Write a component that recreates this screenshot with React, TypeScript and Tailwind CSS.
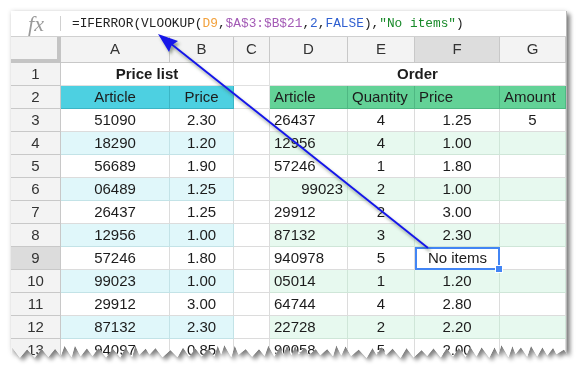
import React from "react";

const cols = ["A", "B", "C", "D", "E", "F", "G"];

const priceList = [
  ["51090", "2.30"], ["18290", "1.20"], ["56689", "1.90"], ["06489", "1.25"],
  ["26437", "1.25"], ["12956", "1.00"], ["57246", "1.80"], ["99023", "1.00"],
  ["29912", "3.00"], ["87132", "2.30"], ["94097", "0.85"],
];

const order = [
  ["26437", "4", "1.25", "5"], ["12956", "4", "1.00", ""], ["57246", "1", "1.80", ""],
  ["99023", "2", "1.00", ""], ["29912", "2", "3.00", ""], ["87132", "3", "2.30", ""],
  ["940978", "5", "No items", ""], ["05014", "1", "1.20", ""], ["64744", "4", "2.80", ""],
  ["22728", "2", "2.20", ""], ["90058", "5", "2.00", ""],
];

// jagged bottom edge for the torn-paper look
const tornClip = () => {
  const pts: string[] = [];
  let x = 556;
  let i = 0;
  while (x > 0) {
    const r = Math.abs(Math.sin(i * 12.9898) * 43758.5453) % 1;
    const y = i % 2 === 0 ? 343 + r * 4 : 334 + r * 5;
    pts.push(`${x.toFixed(1)}px ${y.toFixed(1)}px`);
    x -= 3 + r * 5;
    i++;
  }
  pts.push("0px 344px");
  return `polygon(0px 0px, 556px 0px, ${pts.join(", ")})`;
};

const Cell = ({ children, className = "" }: { children?: React.ReactNode; className?: string }) => (
  <div className={`h-[23px] flex items-center border-r border-b whitespace-nowrap overflow-hidden ${className}`}>
    {children}
  </div>
);

const App = () => {
  return (
    <div className="relative w-[577px] h-[374px] bg-white overflow-hidden pt-[11px] pl-[11px] font-['Liberation_Sans',Arial,sans-serif] text-[15px] text-[#1c1c1c]">
      <div className="w-[556px] [filter:drop-shadow(3px_3px_2px_rgba(0,0,0,0.45))_drop-shadow(0_0_2px_rgba(0,0,0,0.15))]">
        <div className="w-[556px] h-[351px] bg-white border-r border-[#b8b8b8]" style={{ clipPath: tornClip() }}>
          {/* formula bar */}
          <div className="flex items-center h-[26px] border-b border-[#d0d0d0]">
            <div className="w-[50px] flex items-center justify-end">
              <span className="font-['Liberation_Serif',serif] italic text-[22px] text-[#9a9a9a] leading-none mr-[16px]">fx</span>
              <span className="w-px h-[15px] bg-[#d0d0d0]" />
            </div>
            <div className="pl-[11px] font-['Liberation_Mono',monospace] text-[12.8px] text-[#222] whitespace-nowrap">
              =IFERROR(VLOOKUP(<span className="text-[#f2a03a]">D9</span>,<span className="text-[#a35ab5]">$A$3:$B$21</span>,
              <span className="text-[#2f5fd0]">2</span>,<span className="text-[#2f5fd0]">FALSE</span>),
              <span className="text-[#198a2a]">"No items"</span>)
            </div>
          </div>

          <div className="grid grid-cols-[50px_109px_64px_36px_78px_67px_85px_66px]">
            {/* column header */}
            <div className="h-[26px] bg-[#f3f3f3] border-r-4 border-b-4 border-[#c4c4c4]" />
            {cols.map((c) => (
              <div
                key={c}
                className={`h-[26px] flex items-center justify-center border-r border-b border-[#c8c8c8] text-[#333] ${c === "F" ? "bg-[#dddddd]" : "bg-[#f3f3f3]"}`}
              >
                {c}
              </div>
            ))}

            {/* row 1 */}
            <Cell className="justify-center bg-[#f3f3f3] border-[#c8c8c8] text-[#333]">1</Cell>
            <Cell className="col-span-2 justify-center font-bold border-[#e0e0e0]">Price list</Cell>
            <Cell className="border-[#e0e0e0]" />
            <Cell className="col-span-4 justify-center font-bold border-[#e0e0e0]">Order</Cell>

            {/* row 2 */}
            <Cell className="justify-center bg-[#f3f3f3] border-[#c8c8c8] text-[#333]">2</Cell>
            <Cell className="justify-center bg-[#4dd0e1] border-[#3bb5c5]">Article</Cell>
            <Cell className="justify-center bg-[#4dd0e1] border-[#3bb5c5]">Price</Cell>
            <Cell className="border-[#e0e0e0]" />
            <Cell className="px-[4px] bg-[#63d297] border-[#4fb883]">Article</Cell>
            <Cell className="px-[4px] bg-[#63d297] border-[#4fb883]">Quantity</Cell>
            <Cell className="px-[4px] bg-[#63d297] border-[#4fb883]">Price</Cell>
            <Cell className="px-[4px] bg-[#63d297] border-[#4fb883]">Amount</Cell>

            {priceList.map((p, i) => {
              const n = i + 3;
              const band = n % 2 === 0;
              const o = order[i];
              const cyan = band ? "bg-[#e0f7fa] border-[#c3e3e7]" : "bg-white border-[#dcdcdc]";
              const green = band ? "bg-[#e7f9ef] border-[#cfe6d8]" : "bg-white border-[#dcdcdc]";
              return (
                <React.Fragment key={n}>
                  <Cell className={`justify-center border-[#c8c8c8] text-[#333] ${n === 9 ? "bg-[#dcdcdc]" : "bg-[#f3f3f3]"}`}>{n}</Cell>
                  <Cell className={`justify-center ${cyan}`}>{p[0]}</Cell>
                  <Cell className={`justify-center ${cyan}`}>{p[1]}</Cell>
                  <Cell className="bg-white border-[#dcdcdc]" />
                  <Cell className={`px-[4px] ${n === 6 ? "justify-end" : ""} ${green}`}>{o[0]}</Cell>
                  <Cell className={`justify-center ${green}`}>{o[1]}</Cell>
                  {n === 9 ? (
                    <div className="relative h-[23px] flex items-center justify-center border-2 border-[#4285f4] bg-white">
                      {o[2]}
                      <span className="absolute right-[-5px] bottom-[-5px] w-[6px] h-[6px] bg-[#4285f4] border border-white box-content" />
                    </div>
                  ) : (
                    <Cell className={`justify-center ${green}`}>{o[2]}</Cell>
                  )}
                  <Cell className={`justify-center ${green}`}>{o[3]}</Cell>
                </React.Fragment>
              );
            })}
          </div>
        </div>
      </div>

      {/* annotation arrow */}
      <svg className="absolute left-0 top-0 pointer-events-none" width="577" height="374" viewBox="0 0 577 374">
        <defs>
          <filter id="sh" x="-10%" y="-10%" width="120%" height="120%">
            <feDropShadow dx="2" dy="3" stdDeviation="1.8" floodColor="#4a5a40" floodOpacity="0.55" />
          </filter>
        </defs>
        <g filter="url(#sh)">
          <line x1="428" y1="248" x2="170" y2="43" stroke="#1616e8" strokeWidth="2" />
          <polygon points="158,34 178,41 171.5,45.5 169,52" fill="#1616e8" />
        </g>
      </svg>
    </div>
  );
};

export default App;
